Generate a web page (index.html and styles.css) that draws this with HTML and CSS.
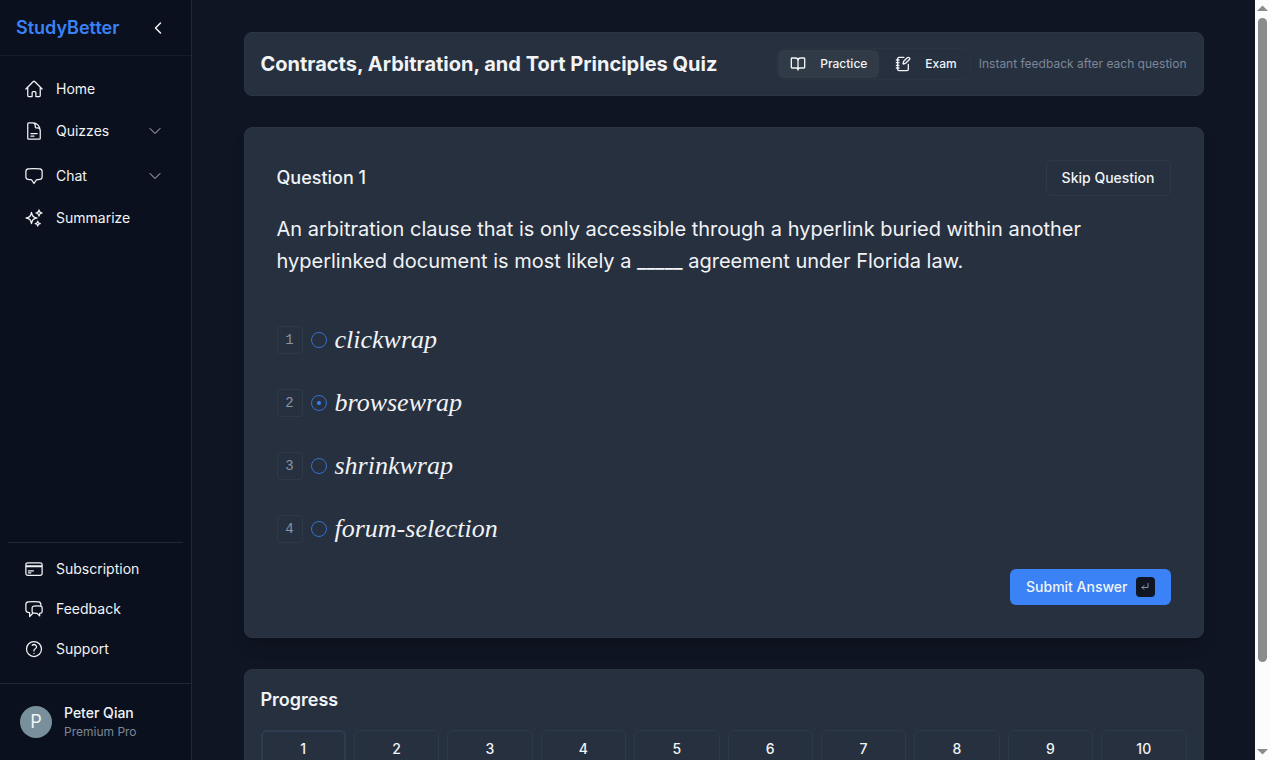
FILE: index.html
```html
<!DOCTYPE html>
<html lang="en">
<head>
<meta charset="utf-8">
<title>StudyBetter</title>
<link rel="stylesheet" href="styles.css">
</head>
<body>
<div class="app">
  <aside class="sidebar">
    <div class="brand-bar">
      <a class="brand" href="#">StudyBetter</a>
      <button class="collapse" type="button" aria-label="Collapse sidebar">
        <svg class="icon-sm" viewBox="0 0 18 18"><path d="M11.500 4 6.500 9l5 5"/></svg>
      </button>
    </div>
    <nav class="nav">
      <a class="nav-item" href="#">
        <svg class="icon" viewBox="0 0 24 24"><path d="m2.25 12 8.954-8.955a1.126 1.126 0 0 1 1.591 0L21.75 12M4.5 9.75v10.125c0 .621.504 1.125 1.125 1.125H9.75v-4.875c0-.621.504-1.125 1.125-1.125h2.25c.621 0 1.125.504 1.125 1.125V21h4.125c.621 0 1.125-.504 1.125-1.125V9.75"/></svg>
        <span>Home</span>
      </a>
      <button class="nav-item nav-group" type="button">
        <svg class="icon" viewBox="0 0 24 24"><path d="M19.5 14.25v-2.625a3.375 3.375 0 0 0-3.375-3.375h-1.5A1.125 1.125 0 0 1 13.5 7.125v-1.5a3.375 3.375 0 0 0-3.375-3.375H8.25m0 12.75h7.5m-7.5 3H12M10.5 2.25H5.625c-.621 0-1.125.504-1.125 1.125v17.25c0 .621.504 1.125 1.125 1.125h12.75c.621 0 1.125-.504 1.125-1.125V11.25a9 9 0 0 0-9-9Z"/></svg>
        <span>Quizzes</span>
        <svg class="chevron" viewBox="0 0 24 24"><path d="m19.5 8.25-7.5 7.5-7.5-7.5"/></svg>
      </button>
      <button class="nav-item" type="button">
        <svg class="icon" viewBox="0 0 24 24"><path d="M2.25 12.76c0 1.6 1.123 2.994 2.707 3.227 1.068.157 2.148.279 3.238.364.466.037.893.281 1.153.671L12 21l2.652-3.978c.26-.39.687-.634 1.153-.67 1.09-.086 2.17-.208 3.238-.365 1.584-.233 2.707-1.626 2.707-3.228V6.741c0-1.602-1.123-2.995-2.707-3.228A48.394 48.394 0 0 0 12 3c-2.392 0-4.744.175-7.043.513C3.373 3.746 2.25 5.14 2.25 6.741v6.018Z"/></svg>
        <span>Chat</span>
        <svg class="chevron" viewBox="0 0 24 24"><path d="m19.5 8.25-7.5 7.5-7.5-7.5"/></svg>
      </button>
      <a class="nav-item" href="#">
        <svg class="icon" viewBox="0 0 24 24"><path d="M9.813 15.904 9 18.75l-.813-2.846a4.5 4.5 0 0 0-3.09-3.09L2.25 12l2.846-.813a4.5 4.5 0 0 0 3.09-3.09L9 5.25l.813 2.846a4.5 4.5 0 0 0 3.09 3.09L15.75 12l-2.846.813a4.5 4.5 0 0 0-3.09 3.09ZM18.259 8.715 18 9.75l-.259-1.035a3.375 3.375 0 0 0-2.455-2.456L14.25 6l1.036-.259a3.375 3.375 0 0 0 2.455-2.456L18 2.25l.259 1.035a3.375 3.375 0 0 0 2.456 2.456L21.75 6l-1.035.259a3.375 3.375 0 0 0-2.456 2.456ZM16.894 20.567 16.5 21.75l-.394-1.183a2.25 2.25 0 0 0-1.423-1.423L13.5 18.75l1.183-.394a2.25 2.25 0 0 0 1.423-1.423l.394-1.183.394 1.183a2.25 2.25 0 0 0 1.423 1.423l1.183.394-1.183.394a2.25 2.25 0 0 0-1.423 1.423Z"/></svg>
        <span>Summarize</span>
      </a>
    </nav>
    <nav class="nav-secondary">
      <a class="nav-item" href="#">
        <svg class="icon" viewBox="0 0 24 24"><path d="M2.25 8.25h19.5M2.25 9h19.5m-16.5 5.25h6m-6 2.25h3m-3.75 3h15a2.25 2.25 0 0 0 2.25-2.25V6.75A2.25 2.25 0 0 0 19.5 4.5h-15a2.25 2.25 0 0 0-2.25 2.25v10.5A2.25 2.25 0 0 0 4.5 19.5Z"/></svg>
        <span>Subscription</span>
      </a>
      <a class="nav-item" href="#">
        <svg class="icon" viewBox="0 0 24 24"><path d="M20.25 8.511c.884.284 1.5 1.128 1.5 2.097v4.286c0 1.136-.847 2.1-1.98 2.193-.34.027-.68.052-1.02.072v3.091l-3-3c-1.354 0-2.694-.055-4.02-.163a2.115 2.115 0 0 1-.825-.242m9.345-8.334a2.126 2.126 0 0 0-.476-.095 48.64 48.64 0 0 0-8.048 0c-1.131.094-1.976 1.057-1.976 2.192v4.286c0 .837.46 1.58 1.155 1.951m9.345-8.334V6.637c0-1.621-1.152-3.026-2.76-3.235A48.455 48.455 0 0 0 11.25 3c-2.115 0-4.198.137-6.24.402-1.608.209-2.76 1.614-2.76 3.235v6.226c0 1.621 1.152 3.026 2.76 3.235.577.075 1.157.14 1.74.194V21l4.155-4.155"/></svg>
        <span>Feedback</span>
      </a>
      <a class="nav-item" href="#">
        <svg class="icon" viewBox="0 0 24 24"><path d="M9.879 7.519c1.171-1.025 3.071-1.025 4.242 0 1.172 1.025 1.172 2.687 0 3.712-.203.179-.43.326-.67.442-.745.361-1.45.999-1.45 1.827v.75M21 12a9 9 0 1 1-18 0 9 9 0 0 1 18 0Zm-9 5.25h.008v.008H12v-.008Z"/></svg>
        <span>Support</span>
      </a>
    </nav>
    <div class="account">
      <div class="avatar" aria-hidden="true">P</div>
      <div>
        <div class="account-name">Peter Qian</div>
        <div class="account-plan">Premium Pro</div>
      </div>
    </div>
  </aside>

  <main class="main">
    <div class="content">
      <header class="card quiz-header">
        <h1>Contracts, Arbitration, and Tort Principles Quiz</h1>
        <div class="mode">
          <div class="segmented">
            <button class="segment segment-active" type="button" aria-pressed="true">
              <svg class="mode-icon" viewBox="0 0 24 24"><path d="M12 7v14M3 18a1 1 0 0 1-1-1V4a1 1 0 0 1 1-1h5a4 4 0 0 1 4 4 4 4 0 0 1 4-4h5a1 1 0 0 1 1 1v13a1 1 0 0 1-1 1h-6a3 3 0 0 0-3 3 3 3 0 0 0-3-3z"/></svg>
              <span>Practice</span>
            </button>
            <button class="segment" type="button" aria-pressed="false">
              <svg class="mode-icon" viewBox="0 0 24 24"><path d="M13.4 2H6a2 2 0 0 0-2 2v16a2 2 0 0 0 2 2h12a2 2 0 0 0 2-2v-7.4M2 6h4M2 10h4M2 14h4M2 18h4M21.378 5.626a1 1 0 1 0-3.004-3.004l-5.01 5.012a2 2 0 0 0-.506.854l-.837 2.87a.5.5 0 0 0 .62.62l2.87-.837a2 2 0 0 0 .854-.506z"/></svg>
              <span>Exam</span>
            </button>
          </div>
          <p class="mode-hint">Instant feedback after each question</p>
        </div>
      </header>

      <form class="card question">
        <div class="question-head">
          <h2>Question 1</h2>
          <button class="skip" type="button">Skip Question</button>
        </div>
        <p class="prompt">An arbitration clause that is only accessible through a hyperlink buried within another hyperlinked document is most likely a _____ agreement under Florida law.</p>
        <div class="options">
          <label class="option"><kbd class="key">1</kbd><input class="radio" type="radio" name="answer"><span class="answer">clickwrap</span></label>
          <label class="option"><kbd class="key">2</kbd><input class="radio" type="radio" name="answer" checked><span class="answer">browsewrap</span></label>
          <label class="option"><kbd class="key">3</kbd><input class="radio" type="radio" name="answer"><span class="answer">shrinkwrap</span></label>
          <label class="option"><kbd class="key">4</kbd><input class="radio" type="radio" name="answer"><span class="answer">forum-selection</span></label>
        </div>
        <button class="submit" type="button">
          <span>Submit Answer</span>
          <kbd class="enter"><svg class="enter-icon" viewBox="0 0 10 10"><path d="M8 1.5v4H2M4 3.5l-2 2 2 2"/></svg></kbd>
        </button>
      </form>

      <section class="card progress">
        <h2>Progress</h2>
        <div class="steps">
          <button class="step step-current" type="button">1</button>
          <button class="step" type="button">2</button>
          <button class="step" type="button">3</button>
          <button class="step" type="button">4</button>
          <button class="step" type="button">5</button>
          <button class="step" type="button">6</button>
          <button class="step" type="button">7</button>
          <button class="step" type="button">8</button>
          <button class="step" type="button">9</button>
          <button class="step" type="button">10</button>
        </div>
      </section>
    </div>
  </main>

  <div class="scrollbar" aria-hidden="true">
    <svg class="arrow" viewBox="0 0 15 18"><path d="M2 11 7.500 5.500 13 11Z"/></svg>
    <div class="track"><div class="thumb"></div></div>
    <svg class="arrow" viewBox="0 0 15 18"><path d="M2 7h11l-5.500 5.500Z"/></svg>
  </div>
</div>
</body>
</html>
```
FILE: styles.css
```css
* {
  box-sizing: border-box;
}

body,
h1,
h2,
p {
  margin: 0;
}

body {
  background: #0f1523;
  color: #f1f3f5;
  font-family: Inter, "Liberation Sans", sans-serif;
  font-size: 14px;
  line-height: 20px;
}

button {
  padding: 0;
  border: 0;
  background: none;
  color: inherit;
  font: inherit;
}

a {
  color: inherit;
  text-decoration: none;
}

svg {
  display: block;
  flex: none;
}

.app {
  display: grid;
  grid-template-columns: 192px minmax(0, 1fr) 15px;
  height: 100vh;
  overflow: hidden;
}

/* Sidebar */

.sidebar {
  display: flex;
  flex-direction: column;
  min-height: 0;
  background: #0a101d;
  border-right: 1px solid #20283a;
}

.brand-bar {
  display: flex;
  align-items: center;
  justify-content: space-between;
  height: 56px;
  padding: 0 24px 0 16px;
  border-bottom: 1px solid #151c2a;
}

.brand {
  color: #3b82f6;
  font-size: 18px;
  font-weight: 600;
  line-height: 28px;
}

.nav {
  display: flex;
  flex-direction: column;
  gap: 2px;
  padding: 13px 8px;
}

.nav-secondary {
  display: flex;
  flex-direction: column;
  margin: auto 8px 0;
  padding: 6px 0 14px;
  border-top: 1px solid #20283a;
}

.nav-item {
  display: flex;
  align-items: center;
  gap: 12px;
  height: 40px;
  padding: 0 20px 0 16px;
  text-align: left;
}

.nav-group {
  margin-bottom: 3px;
}

.icon,
.icon-sm,
.chevron,
.mode-icon,
.enter-icon {
  fill: none;
  stroke: currentColor;
  stroke-width: 1.5;
  stroke-linecap: round;
  stroke-linejoin: round;
}

.icon {
  width: 20px;
  height: 20px;
}

.icon-sm {
  width: 18px;
  height: 18px;
}

.chevron {
  width: 16px;
  height: 16px;
  margin-left: auto;
  color: #c3c7cd;
}

.account {
  display: flex;
  align-items: center;
  gap: 12px;
  height: 77px;
  padding: 0 20px;
  border-top: 1px solid #20283a;
}

.avatar {
  display: grid;
  place-items: center;
  width: 32px;
  height: 32px;
  border-radius: 50%;
  background: #78909c;
  font-size: 18px;
}

.account-name {
  font-weight: 500;
}

.account-plan {
  color: #7c8798;
  font-size: 12px;
  line-height: 18px;
}

/* Main column */

.main {
  min-width: 0;
  overflow: hidden;
}

.content {
  display: flex;
  flex-direction: column;
  gap: 31px;
  max-width: 960px;
  margin: 0 auto;
  padding: 32px 0;
}

.card {
  background: #27303f;
  border: 1px solid #2a3544;
  border-radius: 8px;
}

.quiz-header {
  display: flex;
  align-items: center;
  justify-content: space-between;
  padding: 15px 16px;
}

.quiz-header h1 {
  font-size: 20px;
  font-weight: 700;
  line-height: 28px;
}

.mode {
  display: flex;
  align-items: center;
  gap: 8px;
}

.segmented {
  display: flex;
  gap: 4px;
  padding: 1px;
  border: 1px solid #2a3443;
  border-radius: 8px;
}

.segment {
  display: flex;
  align-items: center;
  gap: 14px;
  height: 28px;
  padding: 0 12px;
  border-radius: 6px;
  font-size: 12px;
  font-weight: 500;
}

.segment-active {
  background: #313b48;
}

.mode-icon {
  width: 16px;
  height: 16px;
  stroke-width: 2;
}

.mode-hint {
  color: #7c8798;
  font-size: 12px;
}

.question {
  display: flex;
  flex-direction: column;
  padding: 32px;
  box-shadow: 0 10px 15px -3px rgb(0 0 0 / 20%);
}

.question-head {
  display: flex;
  align-items: center;
  justify-content: space-between;
}

.question h2 {
  font-size: 18px;
  font-weight: 500;
  line-height: 28px;
}

.skip {
  height: 36px;
  padding: 0 15px;
  border: 1px solid #2e3947;
  border-radius: 6px;
  font-weight: 500;
}

.prompt {
  margin-top: 17px;
  font-size: 20px;
  line-height: 32px;
}

.options {
  display: flex;
  flex-direction: column;
  gap: 32px;
  margin-top: 47px;
}

.option {
  display: flex;
  align-items: center;
  gap: 8px;
  height: 31px;
}

.key {
  display: grid;
  place-items: center;
  width: 26px;
  height: 28px;
  border: 1px solid #2f3a48;
  border-radius: 4px;
  color: #8a94a3;
  font-family: "Liberation Mono", monospace;
  font-size: 14px;
}

.radio {
  appearance: none;
  display: grid;
  place-items: center;
  width: 16px;
  height: 16px;
  margin: 0;
  border: 1px solid #3570d0;
  border-radius: 50%;
}

.radio:checked::before {
  content: "";
  width: 4px;
  height: 4px;
  border-radius: 50%;
  background: #3b82f6;
}

.answer {
  font-family: "Liberation Serif", serif;
  font-size: 26px;
  font-style: italic;
  line-height: 31px;
}

.submit {
  display: flex;
  align-items: center;
  align-self: flex-end;
  gap: 8px;
  height: 36px;
  margin-top: 25px;
  padding: 0 16px;
  border-radius: 6px;
  background: #3b82f6;
  font-weight: 500;
}

.enter {
  display: grid;
  place-items: center;
  width: 19px;
  height: 20px;
  border-radius: 4px;
  background: #0f1523;
  color: #8a94a3;
}

.enter-icon {
  width: 10px;
  height: 10px;
  stroke-width: 1;
}

.progress {
  padding: 16px;
}

.progress h2 {
  font-size: 18px;
  font-weight: 600;
  line-height: 28px;
}

.steps {
  display: grid;
  grid-template-columns: repeat(10, minmax(0, 1fr));
  gap: 8px;
  margin-top: 16px;
}

.step {
  height: 38px;
  border: 1px solid #2c3a4a;
  border-radius: 6px;
  font-weight: 500;
}

.step-current {
  border: 2px solid #2e3c52;
}

/* Scrollbar */

.scrollbar {
  display: flex;
  flex-direction: column;
  background: #fcfcfc;
}

.arrow {
  width: 15px;
  height: 18px;
  fill: #8b8b8b;
}

.track {
  flex: 1;
  padding: 0 3px;
}

.thumb {
  height: 89%;
  border-radius: 5px;
  background: #8b8b8b;
}
```
